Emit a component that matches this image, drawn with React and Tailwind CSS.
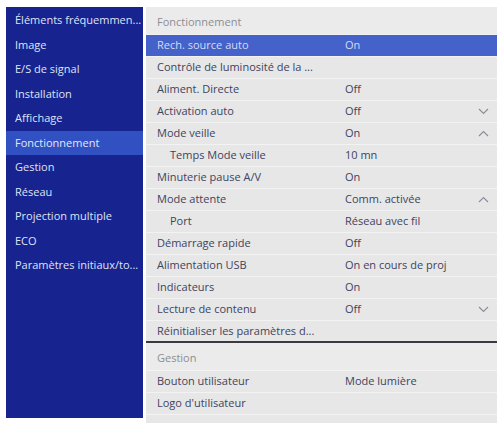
const sections = [
  'Éléments fréquemmen...',
  'Image',
  'E/S de signal',
  'Installation',
  'Affichage',
  'Fonctionnement',
  'Gestion',
  'Réseau',
  'Projection multiple',
  'ECO',
  'Paramètres initiaux/to...',
];

const settings = [
  { label: 'Rech. source auto', value: 'On', active: true },
  { label: 'Contrôle de luminosité de la ...' },
  { label: 'Aliment. Directe', value: 'Off' },
  { label: 'Activation auto', value: 'Off', chevron: 'down' },
  { label: 'Mode veille', value: 'On', chevron: 'up' },
  { label: 'Temps Mode veille', value: '10 mn', sub: true },
  { label: 'Minuterie pause A/V', value: 'On' },
  { label: 'Mode attente', value: 'Comm. activée', chevron: 'up' },
  { label: 'Port', value: 'Réseau avec fil', sub: true },
  { label: 'Démarrage rapide', value: 'Off' },
  { label: 'Alimentation USB', value: 'On en cours de proj' },
  { label: 'Indicateurs', value: 'On' },
  { label: 'Lecture de contenu', value: 'Off', chevron: 'down' },
  { label: 'Réinitialiser les paramètres d...' },
];

const management = [
  { label: 'Bouton utilisateur', value: 'Mode lumière' },
  { label: "Logo d'utilisateur" },
  { label: '' },
];

function Chevron({ dir }) {
  return (
    <svg width="11" height="7" viewBox="0 0 11 7" className="text-[#8a8c99]">
      <path
        d={dir === 'up' ? 'M1 6 L5.5 1.5 L10 6' : 'M1 1 L5.5 5.5 L10 1'}
        fill="none"
        stroke="currentColor"
        strokeWidth="1.1"
      />
    </svg>
  );
}

function SettingRow({ label, value, active, sub, chevron }) {
  return (
    <div
      className={`h-[22px] shrink-0 flex items-center border-b border-[#f3f3f3] text-[11px] ${
        active ? 'bg-[#4462c9] text-[#d6dcf5]' : 'text-[#41435e]'
      }`}
    >
      <div className={`w-[199px] truncate ${sub ? 'pl-[24px]' : 'pl-[11px]'}`}>{label}</div>
      <div className="flex-1">{value}</div>
      <div className="w-[28px] flex justify-center">{chevron && <Chevron dir={chevron} />}</div>
    </div>
  );
}

function GroupHeader({ title }) {
  return (
    <div className="h-[28px] shrink-0 flex items-center pt-[3px] pl-[11px] border-b border-[#f3f3f3] text-[11px] text-[#8d8d93] bg-[#ebebeb]">
      {title}
    </div>
  );
}

export default function App() {
  return (
    <div className="w-[501px] h-[423px] bg-white pt-[7px] pl-[6px] pr-[4px] flex gap-[3px] overflow-hidden font-['Open_Sans',sans-serif]">
      {/* category list */}
      <div className="w-[137px] h-[411px] bg-[#17238e] pt-[1px] shrink-0">
        {sections.map((name) => (
          <div
            key={name}
            className={`h-[24.5px] flex items-center px-[9px] text-[11px] truncate ${
              name === 'Fonctionnement' ? 'bg-[#3150c2] text-[#e4e8fa]' : 'text-[#dfe3f7]'
            }`}
          >
            {name}
          </div>
        ))}
      </div>

      {/* settings list */}
      <div className="flex-1 bg-[#e7e7e7] flex flex-col overflow-hidden">
        <GroupHeader title="Fonctionnement" />
        {settings.map((s) => (
          <SettingRow key={s.label} {...s} />
        ))}
        <div className="h-[2px] shrink-0 bg-[#3a3a40] -mt-[2px]" />
        <GroupHeader title="Gestion" />
        {management.map((s, i) => (
          <SettingRow key={i} {...s} />
        ))}
      </div>
    </div>
  );
}
